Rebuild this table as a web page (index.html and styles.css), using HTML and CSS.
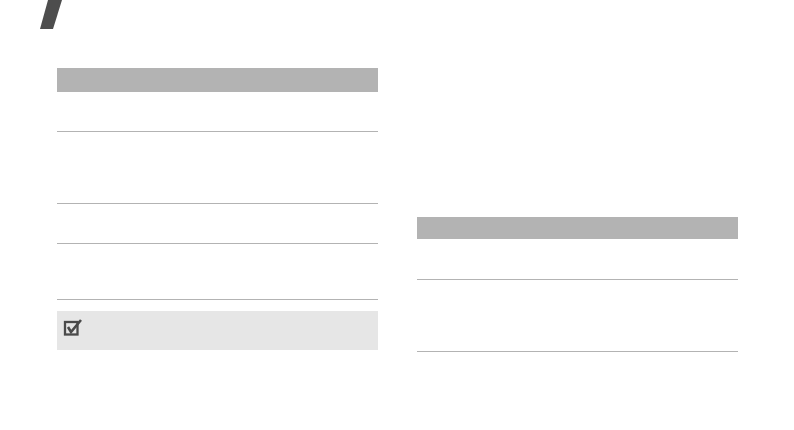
FILE: index.html
```html
<!DOCTYPE html>
<html>
<head>
<meta charset="utf-8">
<link rel="stylesheet" href="styles.css">
</head>
<body>
<div class="top">
  <div class="slash"></div>
</div>
<div class="columns">
  <div class="col col-left">
    <div class="thead"></div>
    <div class="row r39"></div>
    <div class="row r71"></div>
    <div class="row r39"></div>
    <div class="row r55"></div>
    <div class="note">
      <svg class="check" width="20" height="18" viewBox="0 0 20 18">
        <rect x="2" y="3" width="12.5" height="12.5" fill="none" stroke="#4a4a4a" stroke-width="2.3"/>
        <path d="M5 8 L8 13 L18 1" fill="none" stroke="#4a4a4a" stroke-width="2.6"/>
      </svg>
    </div>
  </div>
  <div class="col col-right">
    <div class="thead thead-r"></div>
    <div class="row r40"></div>
    <div class="row r71"></div>
  </div>
</div>
</body>
</html>
```
FILE: styles.css
```css
html, body {
  margin: 0;
  padding: 0;
  background: #ffffff;
  font-family: "Liberation Sans", Arial, sans-serif;
}
.top {
  height: 29px;
  padding-left: 39px;
}
.slash {
  width: 23px;
  height: 29px;
  background: #4d4d4d;
  clip-path: polygon(9px 0, 23px 0, 14px 100%, 1px 100%);
}
.columns {
  display: flex;
  gap: 39px;
  padding-left: 57px;
  padding-top: 39px;
}
.col {
  width: 321px;
  display: flex;
  flex-direction: column;
}
.col-right {
  margin-top: 149px;
}
.thead {
  height: 24px;
  background: #b3b3b3;
}
.thead-r {
  height: 22px;
}
.row {
  border-bottom: 1px solid #b3b3b3;
}
.r39 { height: 39px; }
.r40 { height: 40px; }
.r55 { height: 55px; }
.r71 { height: 71px; }
.note {
  margin-top: 11px;
  height: 39px;
  background: #e6e6e6;
  box-sizing: border-box;
  padding: 8px 0 0 6px;
}
.check {
  display: block;
}
```
